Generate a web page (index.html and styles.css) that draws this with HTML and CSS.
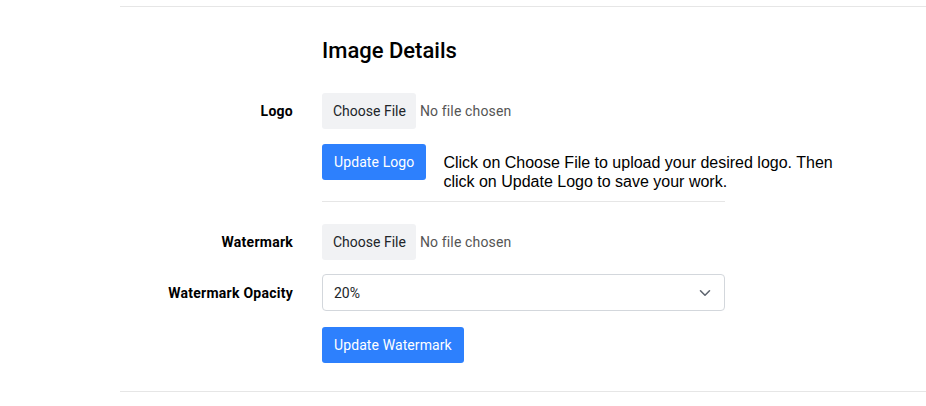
FILE: index.html
```html
<!DOCTYPE html>
<html>
<head>
<meta charset="utf-8">
<link rel="stylesheet" href="styles.css">
</head>
<body>
<div class="page">
  <section class="section">
    <div class="row heading-row">
      <div></div>
      <h2 class="title">Image Details</h2>
    </div>
    <div class="row logo-row">
      <label class="label">Logo</label>
      <div class="file">
        <span class="file-btn">Choose File</span>
        <span class="file-name">No file chosen</span>
      </div>
    </div>
    <div class="row actions-row">
      <div></div>
      <div class="actions">
        <button class="btn">Update Logo</button>
        <p class="help">Click on Choose File to upload your desired logo. Then click on Update Logo to save your work.</p>
      </div>
    </div>
    <div class="row divider-row">
      <div></div>
      <hr class="divider">
    </div>
    <div class="row wm-row">
      <label class="label">Watermark</label>
      <div class="file">
        <span class="file-btn">Choose File</span>
        <span class="file-name">No file chosen</span>
      </div>
    </div>
    <div class="row opacity-row">
      <label class="label">Watermark Opacity</label>
      <div class="select">
        <span>20%</span>
        <svg class="chev" width="12" height="8" viewBox="0 0 12 8"><path d="M1.5 1.8 L6 6.2 L10.5 1.8" fill="none" stroke="#5f6670" stroke-width="1.6" stroke-linecap="round" stroke-linejoin="round"/></svg>
      </div>
    </div>
    <div class="row wm-btn-row">
      <div></div>
      <div><button class="btn">Update Watermark</button></div>
    </div>
  </section>
</div>
</body>
</html>
```
FILE: styles.css
```css
html, body {
  margin: 0;
  padding: 0;
  background: #fff;
}
body {
  font-family: Roboto, "Noto Sans", sans-serif;
  font-size: 14px;
  color: #212529;
}
.page {
  padding-top: 6px;
  width: 926px;
  height: 406px;
  box-sizing: border-box;
  overflow: hidden;
}
.section {
  margin-left: 120px;
  border-top: 1px solid #e6e6e6;
  border-bottom: 1px solid #e6e6e6;
  padding-bottom: 28px;
}
.row {
  display: grid;
  grid-template-columns: 173px 403px;
  column-gap: 29px;
  align-items: center;
}
.heading-row {
  padding-top: 30px;
}
.title {
  margin: 0;
  font-size: 22px;
  line-height: 28px;
  font-weight: 500;
  color: #000;
}
.label {
  text-align: right;
  font-weight: 700;
  font-size: 14px;
  letter-spacing: 0.25px;
  color: #000;
}
.logo-row {
  margin-top: 28px;
}
.file {
  display: flex;
  align-items: center;
  height: 36px;
}
.file-btn {
  display: flex;
  align-items: center;
  height: 36px;
  padding: 0 10px 0 11px;
  background: #f1f2f4;
  border-radius: 3px;
  color: #212529;
}
.file-name {
  margin-left: 4px;
  color: #555;
  letter-spacing: 0.15px;
}
.actions-row {
  margin-top: 15px;
  align-items: start;
}
.actions {
  display: flex;
  align-items: flex-start;
  width: 520px;
}
.btn {
  height: 36px;
  padding: 0 12px;
  border: none;
  border-radius: 3px;
  background: #2d80fd;
  color: #fff;
  font-family: inherit;
  font-size: 14px;
  letter-spacing: 0.1px;
  flex: none;
}
.help {
  margin: 9px 0 0 17px;
  width: 400px;
  font-family: "Liberation Sans", Arial, sans-serif;
  font-size: 16px;
  line-height: 19px;
  color: #000;
}
.divider-row {
  margin-top: 10px;
}
.divider {
  margin: 0;
  border: none;
  border-top: 1px solid #e6e6e6;
  height: 0;
}
.wm-row {
  margin-top: 22px;
}
.opacity-row {
  margin-top: 14px;
}
.select {
  display: flex;
  align-items: center;
  justify-content: space-between;
  height: 37px;
  box-sizing: border-box;
  border: 1px solid #d3d7dc;
  border-radius: 4px;
  padding: 0 13px 0 11px;
  color: #212529;
}
.wm-btn-row {
  margin-top: 16px;
}
```
